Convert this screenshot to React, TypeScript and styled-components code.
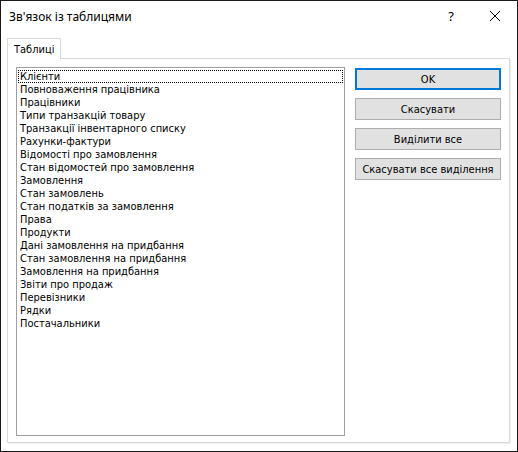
import React, { useState } from "react";
import styled, { createGlobalStyle } from "styled-components";

const GlobalStyle = createGlobalStyle`
  html, body {
    margin: 0;
    padding: 0;
    background: #ffffff;
  }
`;

const tables = [
  "Клієнти",
  "Повноваження працівника",
  "Працівники",
  "Типи транзакцій товару",
  "Транзакції інвентарного списку",
  "Рахунки-фактури",
  "Відомості про замовлення",
  "Стан відомостей про замовлення",
  "Замовлення",
  "Стан замовлень",
  "Стан податків за замовлення",
  "Права",
  "Продукти",
  "Дані замовлення на придбання",
  "Стан замовлення на придбання",
  "Замовлення на придбання",
  "Звіти про продаж",
  "Перевізники",
  "Рядки",
  "Постачальники",
];

const Window = styled.div`
  box-sizing: border-box;
  width: 518px;
  height: 452px;
  border: 1px solid #1a1a1a;
  background: #ffffff;
  display: flex;
  flex-direction: column;
  font-family: "DejaVu Sans Condensed", "DejaVu Sans", sans-serif;
  font-size: 11px;
  color: #000000;
`;

const TitleBar = styled.div`
  height: 30px;
  display: flex;
  align-items: center;
  padding-left: 8px;
`;

const Title = styled.div`
  flex: 1;
  font-family: "Noto Sans", "Open Sans", sans-serif;
  font-size: 12px;
  padding-top: 1px;
`;

const TitleButton = styled.div`
  width: 44px;
  height: 30px;
  display: flex;
  align-items: center;
  justify-content: center;
  font-family: "Noto Sans", sans-serif;
  font-size: 13px;
`;

const Body = styled.div`
  flex: 1;
  display: flex;
  flex-direction: column;
  padding: 7px 6px 8px 6px;
`;

const TabStrip = styled.div`
  display: flex;
  height: 20px;
`;

const Tab = styled.div`
  box-sizing: border-box;
  height: 21px;
  padding: 0 6px;
  display: flex;
  align-items: center;
  border: 1px solid #d9d9d9;
  border-bottom: none;
  background: #ffffff;
  position: relative;
  z-index: 1;
`;

const Panel = styled.div`
  flex: 1;
  display: flex;
  gap: 10px;
  padding: 8px 8px 6px 8px;
  border: 1px solid #d9d9d9;
  box-shadow: 1px 1px 0 #f0f0f0;
  margin-right: 1px;
`;

const ListBox = styled.div`
  box-sizing: border-box;
  width: 330px;
  border: 1px solid #a0a0a0;
  padding: 2px 1px;
  display: flex;
  flex-direction: column;
`;

const Item = styled.div<{ $focused: boolean }>`
  height: 13px;
  line-height: 13px;
  padding-left: 2px;
  white-space: nowrap;
  outline: ${(p) => (p.$focused ? "1px dotted #000" : "none")};
  outline-offset: -1px;
  cursor: default;
`;

const Buttons = styled.div`
  display: flex;
  flex-direction: column;
  gap: 8px;
  padding-top: 1px;
`;

const Button = styled.button<{ $primary?: boolean }>`
  box-sizing: border-box;
  width: 146px;
  height: 22px;
  margin: 0;
  padding: 0;
  font: inherit;
  color: #000000;
  background: #e1e1e1;
  border: ${(p) => (p.$primary ? "2px solid #0078d7" : "1px solid #adadad")};
`;

export default function App() {
  const [selected, setSelected] = useState(0);
  return (
    <>
      <GlobalStyle />
      <Window>
        <TitleBar>
          <Title>Зв'язок із таблицями</Title>
          <TitleButton>?</TitleButton>
          <TitleButton>
            <svg width="12" height="12" viewBox="0 0 12 12">
              <path d="M1 1 L11 11 M11 1 L1 11" stroke="#000" strokeWidth="1" />
            </svg>
          </TitleButton>
        </TitleBar>
        <Body>
          <TabStrip>
            <Tab>Таблиці</Tab>
          </TabStrip>
          <Panel>
            <ListBox>
              {tables.map((t, i) => (
                <Item key={t} $focused={i === selected} onClick={() => setSelected(i)}>
                  {t}
                </Item>
              ))}
            </ListBox>
            <Buttons>
              <Button $primary>OK</Button>
              <Button>Скасувати</Button>
              <Button>Виділити все</Button>
              <Button>Скасувати все виділення</Button>
            </Buttons>
          </Panel>
        </Body>
      </Window>
    </>
  );
}
